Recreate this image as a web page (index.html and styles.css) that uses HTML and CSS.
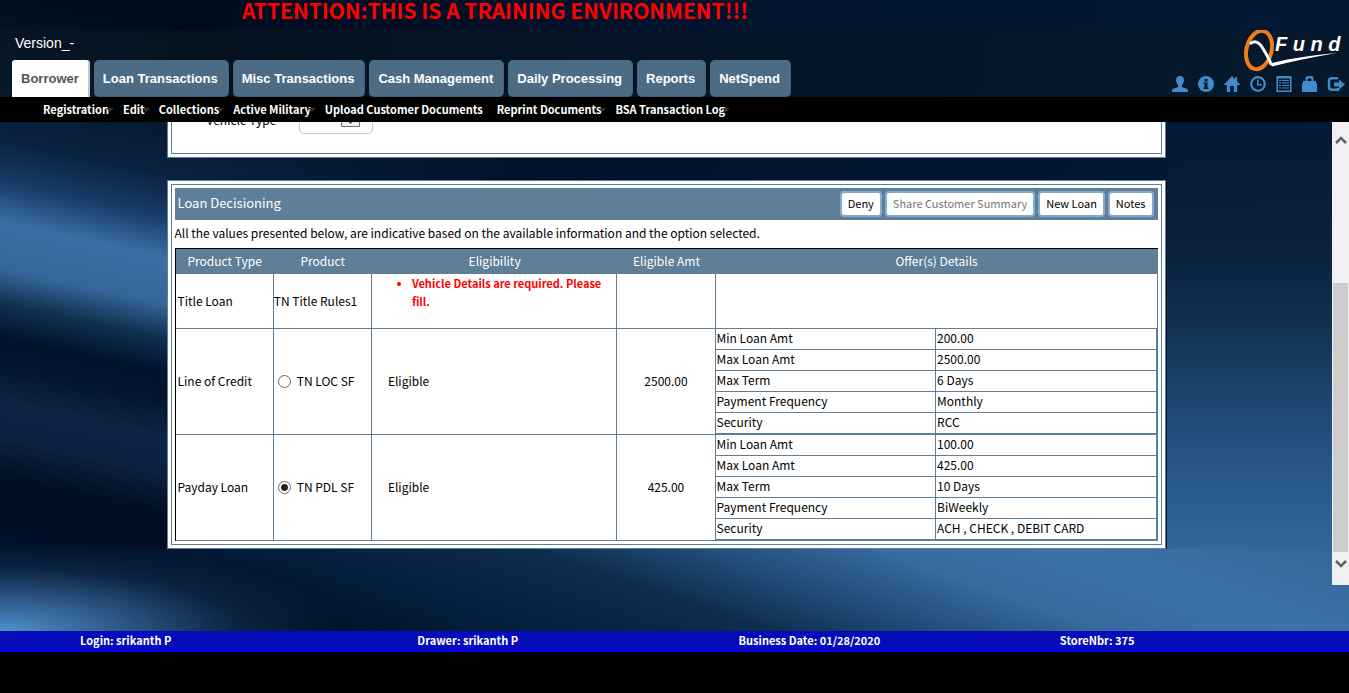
FILE: index.html
```
<!DOCTYPE html>
<html lang="en">
<head>
<meta charset="utf-8">
<title>QFund - Loan Decisioning</title>
<link rel="stylesheet" href="styles.css">
</head>
<body>
<div class="app">
  <div class="banner">ATTENTION:THIS IS A TRAINING ENVIRONMENT!!!</div>
  <header class="header">
    <div class="header-left">
      <div class="version">Version_-</div>
      <nav class="tabs">
        <a class="tab tab-active" href="#">Borrower</a>
        <a class="tab" href="#">Loan Transactions</a>
        <a class="tab" href="#">Misc Transactions</a>
        <a class="tab" href="#">Cash Management</a>
        <a class="tab" href="#">Daily Processing</a>
        <a class="tab" href="#">Reports</a>
        <a class="tab" href="#">NetSpend</a>
      </nav>
    </div>
    <div class="header-right">
      <div class="logo">
        <svg class="logo-mark" width="101" height="42" viewBox="0 0 101 42" aria-hidden="true">
          <ellipse cx="17" cy="20" rx="12.500" ry="19.500" fill="none" stroke="#f07c1a" stroke-width="4" transform="rotate(14 17 20)"/>
          <path d="M8 14C12 10 17 12 20 17C24 23 27 29 29.500 35" fill="none" stroke="#fff" stroke-width="3"/>
          <path d="M28 33L30 36.500C50 31 72 27 95 23C72 25 50 28 30 33Z" fill="#fff"/>
        </svg>
        <span class="logo-text">F u n d</span>
      </div>
      <nav class="icons">
        <a href="#" aria-label="Profile"><svg width="16" height="16" viewBox="0 0 16 16"><path d="M8 0C10.500 0 12 1.500 12 4C12 6 11 8.500 10 9V11C12 12 16 12.500 16 14V16H0V14C0 12.500 4 12 6 11V9C5 8.500 4 6 4 4C4 1.500 5.500 0 8 0Z"/></svg></a>
        <a href="#" aria-label="Information"><svg width="16" height="16" viewBox="0 0 16 16"><path fill-rule="evenodd" d="M8 0A8 8 0 1 1 8 16A8 8 0 1 1 8 0ZM6.500 3V5.500H9.500V3ZM5.500 6.500V8H6.500V11.500H5.500V13H10.500V11.500H9.500V6.500Z"/></svg></a>
        <a href="#" aria-label="Home"><svg width="16" height="16" viewBox="0 0 17 16" preserveAspectRatio="none"><path d="M8.500 0L12 3.500V1H14V5.500L17 8.500V9H14V16H10.500V10H6.500V16H3V9H0V8.500Z"/></svg></a>
        <a href="#" aria-label="Time clock"><svg width="16" height="16" viewBox="0 0 16 16"><circle cx="8" cy="8" r="6.800" fill="none" stroke="#428bca" stroke-width="2.200"/><path d="M7 3.500H8.500V8H12V9.500H7Z"/></svg></a>
        <a href="#" aria-label="Reports list"><svg width="16" height="16" viewBox="0 0 16 16"><path fill-rule="evenodd" d="M0.500 0H15.500V16H0.500ZM2 2.500V14.500H14V2.500Z"/><path d="M3 4H5V5H3ZM6 4H13V5H6ZM3 6.500H5V7.500H3ZM6 6.500H13V7.500H6ZM3 9H5V10H3ZM6 9H13V10H6ZM3 11.500H5V12.500H3ZM6 11.500H13V12.500H6Z"/></svg></a>
        <a href="#" aria-label="Lock"><svg width="15" height="16" viewBox="0 0 15 16"><path fill-rule="evenodd" d="M3.500 5V2.500Q3.500 0 6 0H9Q11.500 0 11.500 2.500V5H14V7L15 7.500V16H0V7.500L1 7V5ZM5.500 5H9.500V3.500Q9.500 2.500 8.500 2.500H6.500Q5.500 2.500 5.500 3.500Z"/></svg></a>
        <a href="#" aria-label="Log out"><svg width="18" height="16" viewBox="0 0 18 16"><path d="M11 2.300H5Q2 2.300 2 5V11Q2 13.700 5 13.700H11V12" fill="none" stroke="#428bca" stroke-width="2.500"/><path d="M12 3.500L18 8.500L12 13.500V10.500H7V6.500H12Z"/></svg></a>
      </nav>
    </div>
  </header>
  <nav class="menu">
    <a class="menu-item has-sub" href="#">Registration</a>
    <a class="menu-item has-sub" href="#">Edit</a>
    <a class="menu-item has-sub" href="#">Collections</a>
    <a class="menu-item has-sub" href="#">Active Military</a>
    <a class="menu-item" href="#">Upload Customer Documents</a>
    <a class="menu-item has-sub" href="#">Reprint Documents</a>
    <a class="menu-item has-sub" href="#">BSA Transaction Log</a>
  </nav>

  <div class="viewport">
    <main class="content">
      <section class="panel">
        <div class="panel-inner vehicle">
          <label class="vehicle-label" for="vehicle-type">Vehicle Type</label>
          <span class="field">
            <select id="vehicle-type"><option></option></select>
            <svg class="field-arrow" width="19" height="20" viewBox="0 0 19 20" aria-hidden="true"><path d="M0.500 0.500H18.500V19.500H0.500Z" fill="#eee" stroke="#707070"/><path d="M6 13H13L9.500 17Z" fill="#333"/></svg>
          </span>
        </div>
      </section>

      <section class="panel">
        <div class="panel-inner">
          <div class="title-bar">
            <h2 class="title">Loan Decisioning</h2>
            <button class="btn" type="button">Deny</button>
            <button class="btn" type="button" disabled>Share Customer Summary</button>
            <button class="btn" type="button">New Loan</button>
            <button class="btn" type="button">Notes</button>
          </div>
          <p class="note">All the values presented below, are indicative based on the available information and the option selected.</p>
          <table class="loans">
            <colgroup><col class="c-10"><col class="c-10"><col class="c-25"><col class="c-10"><col class="c-45"></colgroup>
            <thead>
              <tr><th>Product Type</th><th>Product</th><th>Eligibility</th><th>Eligible Amt</th><th>Offer(s) Details</th></tr>
            </thead>
            <tbody>
              <tr class="row-title">
                <td class="type">Title Loan</td>
                <td>TN Title Rules1</td>
                <td class="reason"><ul class="errors"><li>Vehicle Details are required. Please fill.</li></ul></td>
                <td></td>
                <td></td>
              </tr>
              <tr>
                <td class="type">Line of Credit</td>
                <td><label class="choice"><input type="radio" name="product">TN LOC SF</label></td>
                <td class="eligible">Eligible</td>
                <td class="amount">2500.00</td>
                <td>
                  <table class="offer">
                    <tr><td>Min Loan Amt</td><td>200.00</td></tr>
                    <tr><td>Max Loan Amt</td><td>2500.00</td></tr>
                    <tr><td>Max Term</td><td>6 Days</td></tr>
                    <tr><td>Payment Frequency</td><td>Monthly</td></tr>
                    <tr><td>Security</td><td>RCC</td></tr>
                  </table>
                </td>
              </tr>
              <tr>
                <td class="type">Payday Loan</td>
                <td><label class="choice"><input type="radio" name="product" checked>TN PDL SF</label></td>
                <td class="eligible">Eligible</td>
                <td class="amount">425.00</td>
                <td>
                  <table class="offer">
                    <tr><td>Min Loan Amt</td><td>100.00</td></tr>
                    <tr><td>Max Loan Amt</td><td>425.00</td></tr>
                    <tr><td>Max Term</td><td>10 Days</td></tr>
                    <tr><td>Payment Frequency</td><td>BiWeekly</td></tr>
                    <tr><td>Security</td><td>ACH , CHECK , DEBIT CARD</td></tr>
                  </table>
                </td>
              </tr>
            </tbody>
          </table>
        </div>
      </section>
    </main>
    <div class="scrollbar" aria-hidden="true">
      <svg width="12" height="8" viewBox="0 0 12 8"><path d="M1 7L6 2L11 7" fill="none" stroke="#606060" stroke-width="2.500"/></svg>
      <div class="track"><div class="thumb"></div></div>
      <svg width="12" height="8" viewBox="0 0 12 8"><path d="M1 1L6 6L11 1" fill="none" stroke="#606060" stroke-width="2.500"/></svg>
    </div>
  </div>

  <footer class="status">
    <span>Login: srikanth P</span>
    <span>Drawer: srikanth P</span>
    <span>Business Date: 01/28/2020</span>
    <span>StoreNbr: 375</span>
  </footer>
</div>
</body>
</html>
```
FILE: styles.css
```
* { box-sizing: border-box; }

body {
  margin: 0;
  background: #000;
  color: #000;
  font-family: "Noto Sans CJK SC", sans-serif;
  font-size: 12px;
  line-height: 18px;
}

a { text-decoration: none; }

/* Backdrop: corner glow, left light streak, right glow, bottom streak, then the navy base */
.app {
  background:
    radial-gradient(ellipse 340px 90px at 0 631px, #5090cc 0%, rgba(66, 120, 176, 0.7) 35%, rgba(40, 90, 140, 0.25) 70%, transparent 100%),
    linear-gradient(192deg, #000a1a 0%, #06182e 20%, #0a2342 30%, #173b66 37%, #3a6ea5 44%, #36679a 52%, #10304f 58%, #00122c 64%, #04172f 69%, #0e2545 75%, #0c2040 81%, #010f22 88%, #01102a 100%) 0 0 / 12.5% 549px,
    linear-gradient(180deg, transparent 20%, #0a2240 46%, #10304f 58%, #235080 80%, #34669a 100%) 100% 0 / 13.5% 549px,
    radial-gradient(ellipse 400px 60px at 12% 172px, #0a2342 0%, transparent 100%),
    linear-gradient(19deg, #01102a 0%, #01122a 20%, #04203f 34%, #0e2c4c 48%, #1f4a75 58%, #376a9f 70%, #3d72a9 82%, #34669a 100%) 0 549px / 100% 82px,
    linear-gradient(100deg, #000a18 0%, #01122c 45%, #031a36 100%);
  background-repeat: no-repeat;
}

.banner {
  height: 30px;
  padding-left: 242px;
  color: #f00;
  font-size: 21px;
  font-weight: 700;
  line-height: 20px;
}

.header {
  display: flex;
  justify-content: space-between;
  height: 67px;
  background: rgba(13, 26, 32, 0.4);
}

.header-left { padding-left: 12px; }

.version {
  height: 30px;
  padding-left: 3px;
  color: #fff;
  font: 14px/27px "Liberation Sans", Arial, sans-serif;
}

.tabs { display: flex; gap: 4px; }

.tab {
  height: 37px;
  padding: 0 10px 0 9px;
  border: 1px solid #40607c;
  border-width: 0 1px 1px 0;
  border-radius: 5px;
  background: #4c6c86;
  color: #fff;
  font: bold 13px/37px "Liberation Sans", Arial, sans-serif;
}

.tab-active {
  padding-right: 9px;
  border-right: 2px solid #b9c8d4;
  border-bottom: 0;
  border-radius: 3px 3px 0 0;
  background: #fff;
  color: #555;
}

.header-right { width: 177px; }

.logo {
  display: flex;
  height: 44px;
  padding-left: 70px;
}

.logo-mark { flex: none; margin-right: -68px; }

.logo-text {
  color: #fff;
  font: italic bold 20px/28px "Liberation Sans", Arial, sans-serif;
  white-space: nowrap;
}

.icons { display: flex; gap: 10px; height: 20px; align-items: center; }
.icons svg { display: block; fill: #428bca; }

.menu {
  display: flex;
  gap: 14px;
  height: 25px;
  padding-left: 43px;
  background: #000;
}

.menu-item {
  position: relative;
  color: #fff;
  font-size: 11px;
  font-weight: 700;
  line-height: 25px;
}

.has-sub::after {
  content: "";
  position: absolute;
  top: 11px;
  right: -5px;
  border: 4px solid transparent;
  border-top-color: #333;
  border-bottom: 0;
}

.viewport { display: flex; height: 463px; margin-bottom: 46px; }

.content {
  display: flex;
  flex: 1;
  flex-direction: column;
  justify-content: flex-end;
  gap: 22px;
  align-items: center;
  padding-bottom: 36px;
  overflow: hidden;
}

.panel {
  flex: none;
  width: 75%;
  padding: 3px;
  border: 1px solid #5f7e98;
  background: #fff;
}

.panel-inner { padding: 3px; border: 1px solid #5f7e98; }

.vehicle {
  display: flex;
  gap: 23px;
  align-items: center;
  padding: 3px 35px 15px;
}

.vehicle-label {
  padding-top: 6px;
  line-height: 36px;
}

.field {
  display: grid;
  width: 74px;
  height: 34px;
  border: 1px solid #ccc;
  border-radius: 4px;
  align-items: center;
}

.field select {
  grid-area: 1 / 1;
  width: 100%;
  height: 100%;
  border: 0;
  background: transparent;
  appearance: none;
}

.field-arrow {
  grid-area: 1 / 1;
  justify-self: end;
  margin-right: 12px;
  pointer-events: none;
}

.title-bar {
  display: flex;
  gap: 3px;
  align-items: center;
  height: 32px;
  padding: 0 4px 0 3px;
  background: #5f7e98;
}

.title {
  flex: 1;
  margin: 0;
  padding-bottom: 2px;
  color: #fff;
  font-size: 13px;
  font-weight: 400;
}

.btn {
  height: 26px;
  padding: 0 6px 2px;
  border: 2px solid #84abcf;
  border-radius: 4px;
  background: #fff;
  color: #000;
  font: inherit;
  font-size: 11px;
}

.btn:disabled { color: #777; }

.note { margin: 0; padding: 4px 0 6px; }

.loans {
  width: 100%;
  border: 0 solid #000;
  border-width: 1px 0 0 1px;
  border-spacing: 0;
  table-layout: fixed;
}

.c-10 { width: 10%; }
.c-25 { width: 25%; }
.c-45 { width: 45%; }

th {
  height: 25px;
  padding: 0 0 2px;
  background: #5f7e98;
  color: #fff;
  font-weight: 400;
}

td {
  padding: 0 0 1px;
  border: 0 solid #5f7e98;
  border-width: 0 1px 1px 0;
}

td:has(.offer) { padding: 0; }

.row-title { height: 55px; }
.type { padding-left: 2px; }
.reason { vertical-align: top; }

.errors {
  margin: 0;
  padding-left: 40px;
  color: #f00;
  font-size: 11px;
  font-weight: 700;
}

.eligible { padding-left: 16px; }
.amount { text-align: center; }

.choice { display: flex; gap: 6px; align-items: center; padding-left: 4px; }

.choice input {
  width: 13px;
  height: 13px;
  margin: 0;
  border: 1px solid #666;
  border-radius: 50%;
  background: #fff;
  appearance: none;
}

.choice input:checked { background: radial-gradient(circle, #222 0 3px, #fff 4px); }

.offer { width: 100%; border-spacing: 0; table-layout: fixed; }
.offer td { height: 21px; padding: 0 0 2px 1px; line-height: 18px; }

.scrollbar {
  display: flex;
  flex-direction: column;
  align-items: center;
  width: 17px;
  padding: 14px 0 17px;
  background: #f0f0f0;
}

.track {
  display: flex;
  flex: 1;
  flex-direction: column;
  justify-content: flex-end;
  width: 15px;
  padding-bottom: 8px;
}

.thumb { height: 66%; background: #cdcdcd; }

.status {
  display: grid;
  grid-template-columns: 21fr 20fr 20fr 18fr;
  height: 21px;
  padding-left: 80px;
  border-bottom: 2px solid #00f;
  background: #060cba;
  color: #fff;
  font-size: 11px;
  font-weight: 700;
}
```
